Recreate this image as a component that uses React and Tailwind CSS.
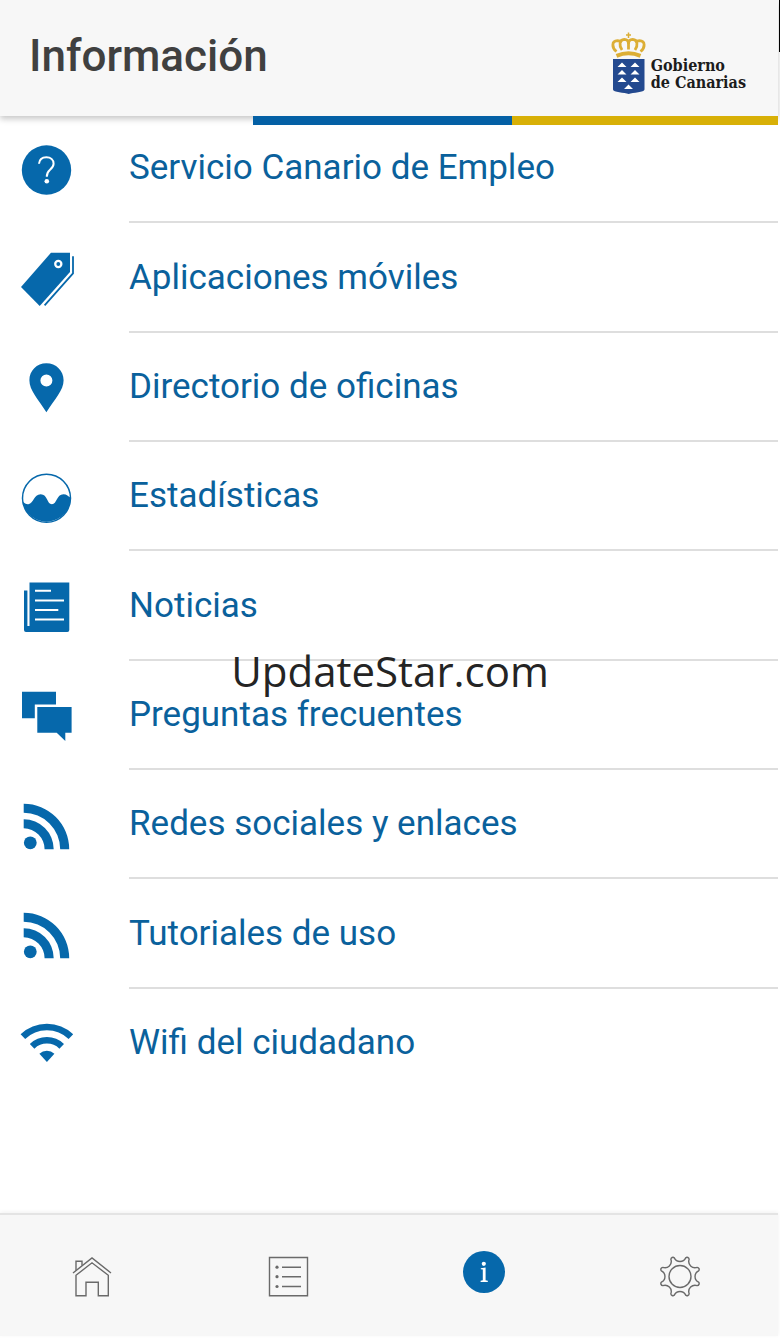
import React from "react";

const BLUE = "#0668ab";

function Glyph({ children }) {
  return (
    <svg viewBox="0 0 56 56" className="mt-0.5 size-14 shrink-0" fill={BLUE} aria-hidden="true">
      {children}
    </svg>
  );
}

function QuestionIcon() {
  return (
    <Glyph>
      <circle cx="27.5" cy="28" r="24.7" />
      <path d="M20 21.8C20.3 17.4 23.2 15.2 27.4 15.2C31.6 15.2 34.6 17.6 34.6 21.7C34.6 24.6 32.8 26.2 30.8 27.9C28.6 29.7 27.8 31 27.8 34.8" fill="none" stroke="#fff" strokeWidth="2" />
      <circle cx="27.8" cy="39.2" r="2.3" fill="#fff" />
    </Glyph>
  );
}

function TagIcon() {
  return (
    <Glyph>
      <path d="M32 1.7H51V21L20.7 55L2 36Z" />
      <circle cx="39.3" cy="13" r="4.2" fill="#fff" />
      <circle cx="39.3" cy="13" r="1.9" />
      <path d="M54 5.3V22.4L25.6 54.3" fill="none" stroke={BLUE} strokeWidth="1.8" />
    </Glyph>
  );
}

function PinIcon() {
  return (
    <Glyph>
      <path fillRule="evenodd" d="M27.4 3.3C17.8 3.3 10.4 10.8 10.4 20.3C10.4 30.5 19 39 27.4 52.3C35.8 39 44.6 30.5 44.6 20.3C44.6 10.8 37 3.3 27.4 3.3ZM27.4 14.5A6 6 0 1 1 27.4 26.5A6 6 0 1 1 27.4 14.5Z" />
    </Glyph>
  );
}

function WaveIcon() {
  return (
    <Glyph>
      <circle cx="27.5" cy="28.2" r="24" fill="none" stroke={BLUE} strokeWidth="1.5" />
      <path d="M3.4 31C5.5 33.6 7.4 34.4 9.4 34.2C14.8 33.6 14.6 24.3 21.7 24.3C28.8 24.3 27.8 34.3 32.9 34.3C38 34.3 37.4 24.3 44.4 24.3C47.8 24.3 49.2 26.5 51.9 27.8A24.4 24.4 0 0 1 3.4 31Z" />
    </Glyph>
  );
}

function NewsIcon() {
  return (
    <Glyph>
      <path d="M10.5 3.5H50.3V51A2 2 0 0 1 48.3 53H7A2 2 0 0 1 5 51V11.5H8.4V47H10.5Z" />
      <path d="M16 11.8H32M16 21.5H45M16 31H39.3M16 40.5H45" stroke="#fff" strokeWidth="1.9" />
    </Glyph>
  );
}

function ChatIcon() {
  return (
    <Glyph>
      <path d="M3 3.7H37V16.4H15.8V30.3H3Z" />
      <path d="M18.3 19H52.6V44.7H46.3V53L37.7 44.7H18.3Z" />
    </Glyph>
  );
}

function FeedIcon() {
  return (
    <Glyph>
      <circle cx="11.3" cy="44.8" r="6.4" />
      <path d="M4.7 5.8A45.5 45.5 0 0 1 50.2 51.2H41.2A36.5 36.5 0 0 0 4.7 14.8Z" />
      <path d="M4.7 21.3A30 30 0 0 1 34.7 51.2H25.6A20.9 20.9 0 0 0 4.7 30.3Z" />
    </Glyph>
  );
}

function WifiIcon() {
  return (
    <Glyph>
      <path d="M3.9 20.7A34.6 34.6 0 0 1 51.9 20.7" fill="none" stroke={BLUE} strokeWidth="6.6" />
      <path d="M13.1 30.3A21.3 21.3 0 0 1 42.7 30.3" fill="none" stroke={BLUE} strokeWidth="6.6" />
      <path d="M20.4 37.8A11 11 0 0 1 35.4 37.8L27.9 46Z" />
    </Glyph>
  );
}

function NavGlyph({ children }) {
  return (
    <svg viewBox="0 0 42 48" className="h-12 w-[42px]" fill="none" stroke="#6a6a6a" strokeWidth="1.4" aria-hidden="true">
      {children}
    </svg>
  );
}

function HomeIcon() {
  return (
    <NavGlyph>
      <path d="M2 22L21 6.9L40 22" />
      <path d="M5 19.4V10.3H11V14.6" />
      <path d="M5 24.3L21 11.8L37.3 24.3V44.8H27.3V31.3H15V44.8H5Z" />
    </NavGlyph>
  );
}

function ListIcon() {
  return (
    <NavGlyph>
      <path d="M2.5 6.5H40.5V44.7H2.5Z" />
      <path d="M15 16.2H34M15 25.7H34M15 35.5H34" />
      <g fill="#6a6a6a" stroke="none">
        <circle cx="10" cy="16.2" r="1.6" />
        <circle cx="10" cy="25.7" r="1.6" />
        <circle cx="10" cy="35.5" r="1.6" />
      </g>
    </NavGlyph>
  );
}

function InfoIcon() {
  return (
    <NavGlyph>
      <circle cx="21" cy="21" r="21" fill={BLUE} stroke="none" />
      <circle cx="20.8" cy="12.8" r="2.1" fill="#fff" stroke="none" />
      <path d="M17.8 17.2L22.6 16.6V29.2L24.8 29.7V31H17.6V29.7L19.8 29.2V18.6L17.8 18.3Z" fill="#fff" stroke="none" />
    </NavGlyph>
  );
}

function gearPath(cx, cy) {
  const point = (deg, r) => {
    const a = (deg * Math.PI) / 180;
    return `${(cx + r * Math.cos(a)).toFixed(2)} ${(cy + r * Math.sin(a)).toFixed(2)}`;
  };
  let d = "";
  for (let k = 0; k < 8; k++) {
    const a = 22.5 + 45 * k;
    d += `${k ? "L" : "M"}${point(a - 5.5, 19.5)}A2.1 2.1 0 0 1 ${point(a + 5.5, 19.5)}A6.3 6.3 0 0 0 ${point(a + 39.5, 19.5)}`;
  }
  return d + "Z";
}

function GearIcon() {
  return (
    <NavGlyph>
      <path d={gearPath(21, 25.5)} />
      <circle cx="21" cy="25.5" r="11" />
    </NavGlyph>
  );
}

function Emblem() {
  return (
    <svg viewBox="0 0 36 64" className="h-16 w-9 shrink-0" aria-hidden="true">
      <g fill="none" stroke="#dcae35" strokeWidth="2.8">
        <path d="M17.5 0.5V6M15 3H20" strokeWidth="1.5" />
        <path d="M5.5 19.5C0.5 15.5 0.5 9 6.5 8.7C8.5 8.7 9.7 9.5 10.3 10.5" />
        <path d="M29.5 19.5C34.5 15.5 34.5 9 28.5 8.7C26.5 8.7 25.3 9.5 24.7 10.5" />
        <path d="M11 18C7.8 13.5 8.3 7.5 13.3 7.3C16 7.3 17.5 9.3 17.5 12V17.5" />
        <path d="M24 18C27.2 13.5 26.7 7.5 21.7 7.3C19 7.3 17.5 9.3 17.5 12" />
        <path d="M5.5 23.8Q17.5 18.8 29.5 23.8" strokeWidth="4" />
      </g>
      <path d="M2 27H33.5V57.500C33.5 60.5 22 60.5 17.7 62C13.5 60.5 2 60.5 2 57.500Z" fill="#23498f" />
      <path
        d="M6.5 35L11 30.500L15.5 35ZM19.5 35L24 30.500L28.5 35ZM6.5 42.500L11 38L15.5 42.500ZM19.5 42.500L24 38L28.5 42.500ZM6.5 50L11 45.500L15.5 50ZM19.5 50L24 45.500L28.5 50ZM13 57L17.5 52.500L22 57Z"
        fill="#fff"
      />
    </svg>
  );
}

const items = [
  { label: "Servicio Canario de Empleo", Icon: QuestionIcon },
  { label: "Aplicaciones móviles", Icon: TagIcon },
  { label: "Directorio de oficinas", Icon: PinIcon },
  { label: "Estadísticas", Icon: WaveIcon },
  { label: "Noticias", Icon: NewsIcon },
  { label: "Preguntas frecuentes", Icon: ChatIcon },
  { label: "Redes sociales y enlaces", Icon: FeedIcon },
  { label: "Tutoriales de uso", Icon: FeedIcon },
  { label: "Wifi del ciudadano", Icon: WifiIcon },
];

const tabs = [
  { label: "Inicio", Icon: HomeIcon },
  { label: "Listado", Icon: ListIcon },
  { label: "Información", Icon: InfoIcon },
  { label: "Ajustes", Icon: GearIcon },
];

export default function App() {
  return (
    <div className="relative flex min-h-screen flex-col bg-white pr-0.5 pb-[3px] font-['Roboto',sans-serif]">
      <div className="absolute top-0 right-0 z-20 h-[52px] w-px bg-black" />

      <header className="relative z-10 flex h-[116px] items-center justify-between bg-[#f7f7f7] pr-8 pl-[29px] shadow-[0_3px_6px_rgba(0,0,0,0.22)]">
        <h1 className="pb-1 text-[44px] leading-12 font-medium text-[#404040]">Información</h1>
        <div className="flex items-center gap-1 pt-3">
          <Emblem />
          <p className="pt-5 font-['DejaVu_Serif_Condensed','DejaVu_Serif',serif] text-base leading-[17px] font-bold text-[#1c1c1c]">
            Gobierno
            <br />
            de Canarias
          </p>
        </div>
        <div className="absolute inset-x-0 top-full grid h-[9px] grid-cols-[253fr_259fr_266fr]">
          <span />
          <span className="bg-[#0460a5]" />
          <span className="bg-[#d8b007]" />
        </div>
      </header>

      <main className="-mt-0.5 flex flex-1 flex-col pb-[115px]">
        <ul className="grid flex-1 auto-rows-fr">
          {items.map(({ label, Icon }, i) => (
            <li key={label} className="flex">
              <a href="#" className="flex flex-1 items-center gap-[54px] pl-[19px] text-[#0a619c]">
                <Icon />
                <span
                  className={
                    i < items.length - 1
                      ? "flex flex-1 items-center self-stretch border-b-2 border-[#dedede] pt-0.5 text-[35px]"
                      : "flex flex-1 items-center self-stretch text-[35px]"
                  }
                >
                  {label}
                </span>
              </a>
            </li>
          ))}
        </ul>
      </main>

      <nav className="flex h-[123px] items-start justify-between border-t-2 border-[#e4e4e4] bg-[#f7f7f7] pt-9 pr-[77px] pl-[71px] shadow-[0_-1px_4px_rgba(0,0,0,0.06)]">
        {tabs.map(({ label, Icon }) => (
          <button key={label} type="button" aria-label={label}>
            <Icon />
          </button>
        ))}
      </nav>

      <p className="pointer-events-none absolute inset-x-0 top-1/2 z-20 -mt-5 text-center font-['Open_Sans','Noto_Sans',sans-serif] text-[42px] leading-none text-[#242424]">
        UpdateStar.com
      </p>
    </div>
  );
}
